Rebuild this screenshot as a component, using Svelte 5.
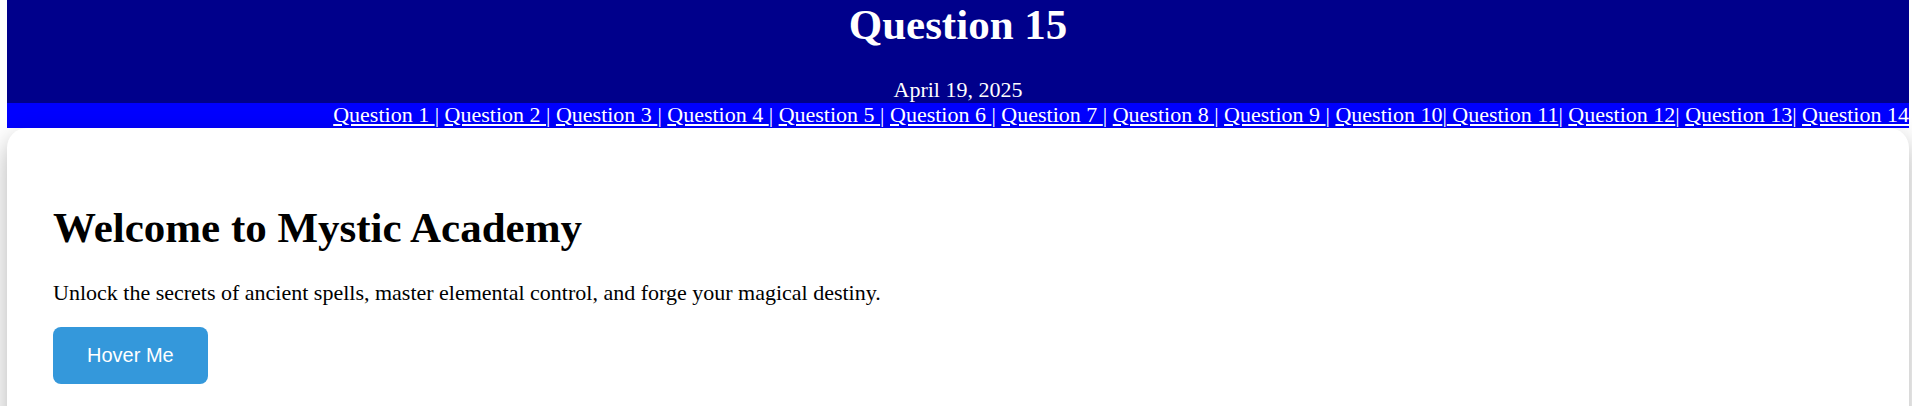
<script>
  const first = Array.from({ length: 9 }, (_, i) => i + 1);
</script>

<header>
  <h1>Question 15</h1>
  <p>April 19, 2025</p>
</header>
<nav>
  {#each first as n}<a href="#q{n}">{`Question ${n} `}</a>{'| '}{/each}<a href="#q10">Question 10</a>|<a href="#q11">{' Question 11'}</a>| <a href="#q12">Question 12</a>| <a href="#q13">Question 13</a>| <a href="#q14">Question 14</a>
</nav>
<main>
  <h2>Welcome to Mystic Academy</h2>
  <p>Unlock the secrets of ancient spells, master elemental control, and forge your magical destiny.</p>
  <button type="button">Hover Me</button>
</main>

<style>
  :global(html) {
    scrollbar-width: none;
  }
  :global(body) {
    margin: 0;
    padding: 0 3px 0 7px;
    background: #fff;
    font-family: "Liberation Serif", "Times New Roman", serif;
    font-size: 22px;
    line-height: 25px;
  }
  header {
    padding-bottom: 1px;
    background: #00008b;
    color: #fff;
    text-align: center;
  }
  h1 {
    margin: 0 0 27px;
    font-size: 43px;
    line-height: 50px;
  }
  header p {
    margin: 0;
  }
  nav {
    padding-bottom: 2px;
    background: #00f;
    color: #fff;
    line-height: 23px;
    text-align: right;
  }
  a {
    color: #fff;
  }
  main {
    padding: 75px 46px;
    border-radius: 20px;
    box-shadow: 0 11px 27px rgba(0, 0, 0, 0.3);
  }
  h2 {
    margin: 0 0 27px;
    font-size: 43px;
    line-height: 50px;
  }
  main p {
    margin: 0 0 22px;
  }
  button {
    padding: 16px 34px;
    border: 0;
    border-radius: 8px;
    background: #3498db;
    color: #fff;
    font: 20px/25px "Liberation Sans", Arial, sans-serif;
    cursor: pointer;
  }
  button:hover {
    background: #2980b9;
  }
</style>
